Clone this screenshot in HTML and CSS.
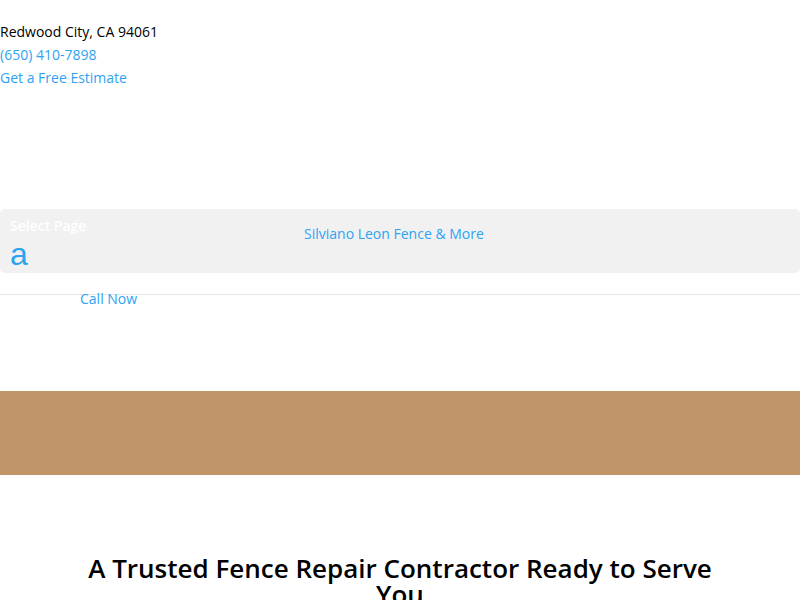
FILE: index.html
```html
<!DOCTYPE html>
<html>
<head>
    <meta charset="UTF-8">
    <title>Silviano Leon Fence &amp; More</title>
    <link rel="stylesheet" href="styles.css">
</head>
<body>
    <div id="top-header">
        <div class="top-line">Redwood City, CA 94061</div>
        <a class="top-line" href="#">(650) 410-7898</a>
        <a class="top-line" href="#">Get a Free Estimate</a>
    </div>

    <div id="main-header">
        <div id="menu-bar">
            <div class="mobile-nav">
                <span class="select-page">Select Page</span>
                <span class="mobile-toggle">a</span>
            </div>
            <a class="logo-text" href="#">Silviano Leon Fence &amp; More</a>
        </div>
    </div>

    <div id="call-row">
        <a class="call-now" href="#">Call Now</a>
    </div>

    <div class="hero-band"></div>

    <div class="intro-section">
        <h2 class="intro-title">A Trusted Fence Repair Contractor Ready to Serve You</h2>
    </div>
</body>
</html>
```

FILE: styles.css
```css
body {
    margin: 0;
    font-family: "Open Sans", "Liberation Sans", sans-serif;
    font-size: 14px;
    line-height: 23px;
    color: #000;
    background-color: #fff;
}

a {
    color: #2ea3f2;
    text-decoration: none;
}

#top-header {
    display: flex;
    flex-direction: column;
    align-items: flex-start;
    padding-top: 20px;
}

#main-header {
    padding-top: 120px;
    border-bottom: 1px solid #e5e5e5;
    padding-bottom: 21px;
}

#menu-bar {
    display: flex;
    align-items: flex-start;
    height: 64px;
    background-color: #f1f1f1;
    border-radius: 5px;
}

.mobile-nav {
    display: flex;
    flex-direction: column;
    padding: 5px 0 0 10px;
    width: 294px;
}

.select-page {
    color: #fff;
    font-weight: 600;
    line-height: 23px;
}

.mobile-toggle {
    margin-top: 2px;
    color: #2ea3f2;
    font-family: "Liberation Sans", Arial, sans-serif;
    font-size: 32px;
    line-height: 30px;
}

.logo-text {
    margin-top: 13px;
}

#call-row {
    margin-top: -8px;
    padding-left: 80px;
}

.hero-band {
    margin-top: 81px;
    height: 84px;
    background-color: #c0956a;
}

.intro-section {
    padding: 80px 80px 0;
}

.intro-title {
    margin: 0;
    font-size: 26px;
    font-weight: 600;
    line-height: 26px;
    text-align: center;
}
```
